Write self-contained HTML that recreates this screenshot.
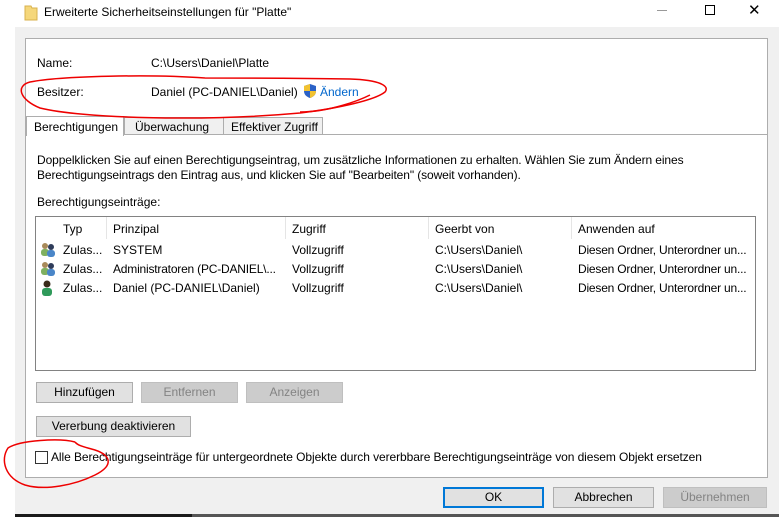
<!DOCTYPE html>
<html><head><meta charset="utf-8"><style>
*{margin:0;padding:0;box-sizing:border-box}
body{width:779px;height:517px;overflow:hidden;background:#fff;font-family:"Liberation Sans",sans-serif;font-size:12px;color:#000;position:relative}
.a{position:absolute;white-space:nowrap}
.btn{position:absolute;height:21px;background:#e1e1e1;border:1px solid #adadad;text-align:center;line-height:19px;font-size:12px}
.dis{color:#838383;background:#cccccc;border-color:#bfbfbf}
</style></head><body>
<div class="a" style="left:0;top:0;width:779px;height:27px;background:#fff"></div>
<svg class="a" style="left:24px;top:5px" width="14" height="16"><path d="M1 1h6l1 2h5v12H1z" fill="#f5d77b" stroke="#d8b24c"/></svg>
<div class="a" style="left:44px;top:5px;font-size:12px">Erweiterte Sicherheitseinstellungen für "Platte"</div>
<div class="a" style="left:657px;top:10px;width:10px;height:1px;background:#999"></div>
<div class="a" style="left:705px;top:5px;width:10px;height:10px;border:1px solid #000"></div>
<div class="a" style="left:748px;top:1px;font-size:15px">✕</div>
<div class="a" style="left:15px;top:27px;width:764px;height:488px;background:#f0f0f0"></div>
<div class="a" style="left:25px;top:38px;width:743px;height:440px;background:#fff;border:1px solid #adadad"></div>
<div class="a" style="left:26px;top:134px;width:741px;height:1px;background:#adadad"></div>
<div class="a" style="left:37px;top:56px">Name:</div>
<div class="a" style="left:151px;top:56px">C:\Users\Daniel\Platte</div>
<div class="a" style="left:37px;top:85px">Besitzer:</div>
<div class="a" style="left:151px;top:85px">Daniel (PC-DANIEL\Daniel)</div>
<svg class="a" style="left:303px;top:83px" width="14" height="16"><path d="M7 1L1 3v5c0 4 3 6 6 7 3-1 6-3 6-7V3z" fill="#2b62c7"/><path d="M7 1v7H1V3zM7 8h6c0 4-3 6-6 7z" fill="#f2c230"/></svg>
<div class="a" style="left:320px;top:85px;color:#0066cc">Ändern</div>
<div class="a" style="left:26px;top:116px;width:98px;height:20px;background:#fff;border:1px solid #adadad;border-bottom:none;padding:3px 0 0 7px">Berechtigungen</div>
<div class="a" style="left:124px;top:117px;width:100px;height:18px;background:#f0f0f0;border:1px solid #adadad;padding:2px 0 0 10px">Überwachung</div>
<div class="a" style="left:223px;top:117px;width:100px;height:18px;background:#f0f0f0;border:1px solid #adadad;padding:2px 0 0 7px">Effektiver Zugriff</div>
<div class="a" style="left:37px;top:153px;line-height:15px;letter-spacing:-0.1px">Doppelklicken Sie auf einen Berechtigungseintrag, um zusätzliche Informationen zu erhalten. Wählen Sie zum Ändern eines<br>Berechtigungseintrags den Eintrag aus, und klicken Sie auf "Bearbeiten" (soweit vorhanden).</div>
<div class="a" style="left:37px;top:195px">Berechtigungseinträge:</div>
<div class="a" style="left:35px;top:216px;width:721px;height:155px;border:1px solid #828282;background:#fff"></div>
<div class="a" style="left:106px;top:217px;width:1px;height:22px;background:#e5e5e5"></div>
<div class="a" style="left:285px;top:217px;width:1px;height:22px;background:#e5e5e5"></div>
<div class="a" style="left:428px;top:217px;width:1px;height:22px;background:#e5e5e5"></div>
<div class="a" style="left:571px;top:217px;width:1px;height:22px;background:#e5e5e5"></div>
<div class="a" style="left:63px;top:222px">Typ</div><div class="a" style="left:113px;top:222px">Prinzipal</div><div class="a" style="left:292px;top:222px">Zugriff</div><div class="a" style="left:435px;top:222px">Geerbt von</div><div class="a" style="left:578px;top:222px">Anwenden auf</div>
<svg class="a" style="left:39px;top:242px" width="18" height="60"><g><circle cx="6" cy="4" r="3" fill="#a88a5a"/><rect x="2" y="7" width="8" height="7" rx="3" fill="#7fb060"/><circle cx="12" cy="5" r="3" fill="#2f3c5a"/><rect x="8" y="8" width="8" height="7" rx="3" fill="#4a86c8"/></g><g transform="translate(0,19)"><circle cx="6" cy="4" r="3" fill="#a88a5a"/><rect x="2" y="7" width="8" height="7" rx="3" fill="#7fb060"/><circle cx="12" cy="5" r="3" fill="#2f3c5a"/><rect x="8" y="8" width="8" height="7" rx="3" fill="#4a86c8"/></g><g transform="translate(0,38)"><circle cx="8" cy="4" r="3.5" fill="#3a2a1a"/><rect x="3" y="8" width="10" height="8" rx="3" fill="#2f9a5a"/></g></svg>
<div class="a" style="left:63px;top:243px">Zulas...</div><div class="a" style="left:113px;top:243px">SYSTEM</div><div class="a" style="left:292px;top:243px">Vollzugriff</div><div class="a" style="left:435px;top:243px">C:\Users\Daniel\</div><div class="a" style="left:578px;top:243px;letter-spacing:-0.2px">Diesen Ordner, Unterordner un...</div>
<div class="a" style="left:63px;top:262px">Zulas...</div><div class="a" style="left:113px;top:262px;letter-spacing:-0.2px">Administratoren (PC-DANIEL\...</div><div class="a" style="left:292px;top:262px">Vollzugriff</div><div class="a" style="left:435px;top:262px">C:\Users\Daniel\</div><div class="a" style="left:578px;top:262px;letter-spacing:-0.2px">Diesen Ordner, Unterordner un...</div>
<div class="a" style="left:63px;top:281px">Zulas...</div><div class="a" style="left:113px;top:281px">Daniel (PC-DANIEL\Daniel)</div><div class="a" style="left:292px;top:281px">Vollzugriff</div><div class="a" style="left:435px;top:281px">C:\Users\Daniel\</div><div class="a" style="left:578px;top:281px;letter-spacing:-0.2px">Diesen Ordner, Unterordner un...</div>
<div class="btn" style="left:36px;top:382px;width:97px">Hinzufügen</div>
<div class="btn dis" style="left:141px;top:382px;width:97px">Entfernen</div>
<div class="btn dis" style="left:246px;top:382px;width:97px">Anzeigen</div>
<div class="btn" style="left:36px;top:416px;width:155px">Vererbung deaktivieren</div>
<div class="a" style="left:35px;top:451px;width:13px;height:13px;border:1px solid #333;background:#fff"></div>
<div class="a" style="left:51px;top:450px;letter-spacing:-0.08px">Alle Berechtigungseinträge für untergeordnete Objekte durch vererbbare Berechtigungseinträge von diesem Objekt ersetzen</div>
<div class="btn" style="left:443px;top:487px;width:101px;border:2px solid #0078d7;line-height:17px">OK</div>
<div class="btn" style="left:553px;top:487px;width:101px">Abbrechen</div>
<div class="btn dis" style="left:663px;top:487px;width:104px">Übernehmen</div>
<div class="a" style="left:15px;top:514px;width:177px;height:3px;background:#1a1a1a"></div>
<div class="a" style="left:192px;top:514px;width:587px;height:3px;background:#555"></div>
<svg class="a" style="left:0;top:0" width="779" height="517"><g fill="none" stroke="#e00" stroke-width="1.5"><path d="M205 78C150 74 60 76 30 82C15 86 20 100 40 108C80 118 200 122 300 113C340 108 375 100 385 92C390 86 380 80 350 79C300 78 240 78 205 78"/><path d="M300 112C330 112 360 100 370 95"/><path d="M75 442C60 438 20 440 8 448C0 460 5 478 25 485C45 491 75 485 95 475C115 465 110 455 95 450C85 447 78 446 75 442"/></g></svg>
</body></html>
